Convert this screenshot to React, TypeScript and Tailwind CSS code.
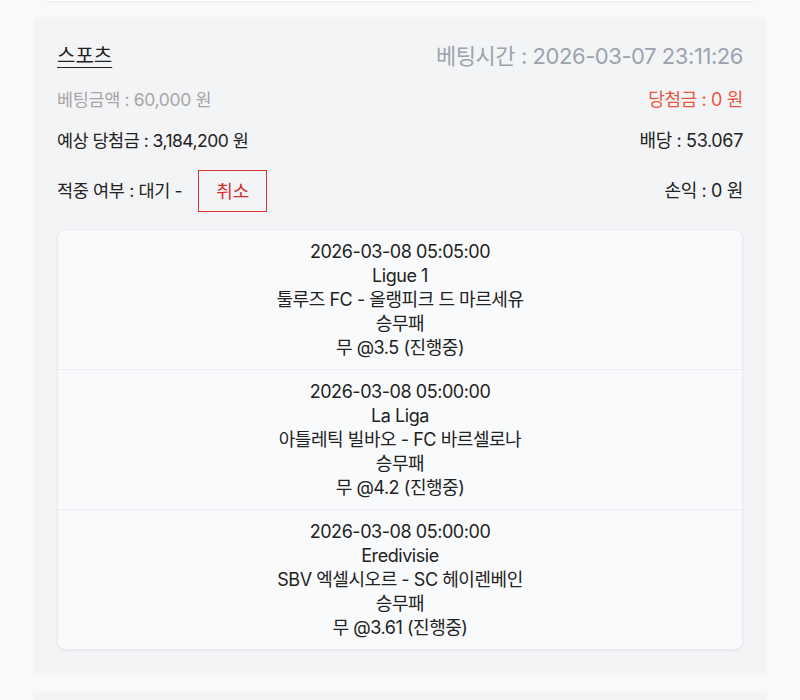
const font = { fontFamily: '"Inter", "Noto Sans CJK KR", sans-serif' }

type Pick = {
  time: string
  league: string
  match: string
  market: string
  pick: string
}

const picks: Pick[] = [
  {
    time: '2026-03-08 05:05:00',
    league: 'Ligue 1',
    match: '툴루즈 FC - 올랭피크 드 마르세유',
    market: '승무패',
    pick: '무 @3.5 (진행중)',
  },
  {
    time: '2026-03-08 05:00:00',
    league: 'La Liga',
    match: '아틀레틱 빌바오 - FC 바르셀로나',
    market: '승무패',
    pick: '무 @4.2 (진행중)',
  },
  {
    time: '2026-03-08 05:00:00',
    league: 'Eredivisie',
    match: 'SBV 엑셀시오르 - SC 헤이렌베인',
    market: '승무패',
    pick: '무 @3.61 (진행중)',
  },
]

function Row({ left, right }: { left: React.ReactNode; right: React.ReactNode }) {
  return (
    <div className="flex items-center justify-between">
      <div className="flex items-center">{left}</div>
      <div>{right}</div>
    </div>
  )
}

export default function App() {
  return (
    <div className="min-h-[700px] bg-[#f8f9fb] overflow-hidden" style={font}>
      <div className="mx-[45px] h-[1px] bg-white shadow-[0_1px_3px_rgba(0,0,0,0.12)]" />

      <div className="mx-[33px] mt-[16px] bg-[#f3f4f6] px-[24px] pt-[24px] pb-[25px]">
        <div className="flex flex-col gap-[17px]">
          <Row
            left={<span className="text-[20px] leading-[30px] text-[#222] underline underline-offset-4 decoration-1">스포츠</span>}
            right={<span className="text-[22px] leading-[30px] tracking-[-0.02em] text-[#9ca3af]">베팅시간 : 2026-03-07 23:11:26</span>}
          />
          <Row
            left={<span className="text-[17.5px] leading-[24px] tracking-[-0.02em] text-[#a6a6a6]">베팅금액 : 60,000 원</span>}
            right={<span className="text-[18px] leading-[24px] tracking-[-0.02em] text-[#e9573f]">당첨금 : 0 원</span>}
          />
          <Row
            left={<span className="text-[17.5px] leading-[24px] tracking-[-0.03em] text-[#222]">예상 당첨금 : 3,184,200 원</span>}
            right={<span className="text-[18px] leading-[24px] tracking-[-0.02em] text-[#222]">배당 : 53.067</span>}
          />
          <Row
            left={
              <>
                <span className="text-[17.5px] leading-[24px] tracking-[-0.02em] text-[#222]">적중 여부 : 대기 -</span>
                <button className="ml-[16px] h-[42px] w-[69px] border border-[#d9342b] text-[18px] text-[#d32f2f]">
                  취소
                </button>
              </>
            }
            right={<span className="text-[18px] leading-[24px] tracking-[-0.02em] text-[#222]">손익 : 0 원</span>}
          />

          <div className="rounded-[8px] border border-[#e8eaed] bg-[#f9fafb] shadow-[0_1px_2px_rgba(0,0,0,0.06)]">
            {picks.map((p, i) => (
              <div
                key={i}
                className={
                  'pt-[10px] pb-[9px] text-center text-[18px] leading-[24px] tracking-[-0.025em] text-[#222] ' +
                  (i > 0 ? 'border-t border-[#eceef1]' : '')
                }
              >
                <div>{p.time}</div>
                <div>{p.league}</div>
                <div>{p.match}</div>
                <div>{p.market}</div>
                <div>{p.pick}</div>
              </div>
            ))}
          </div>
        </div>
      </div>

      <div className="mx-[33px] mt-[17px] h-[40px] bg-[#f3f4f6]" />
    </div>
  )
}
